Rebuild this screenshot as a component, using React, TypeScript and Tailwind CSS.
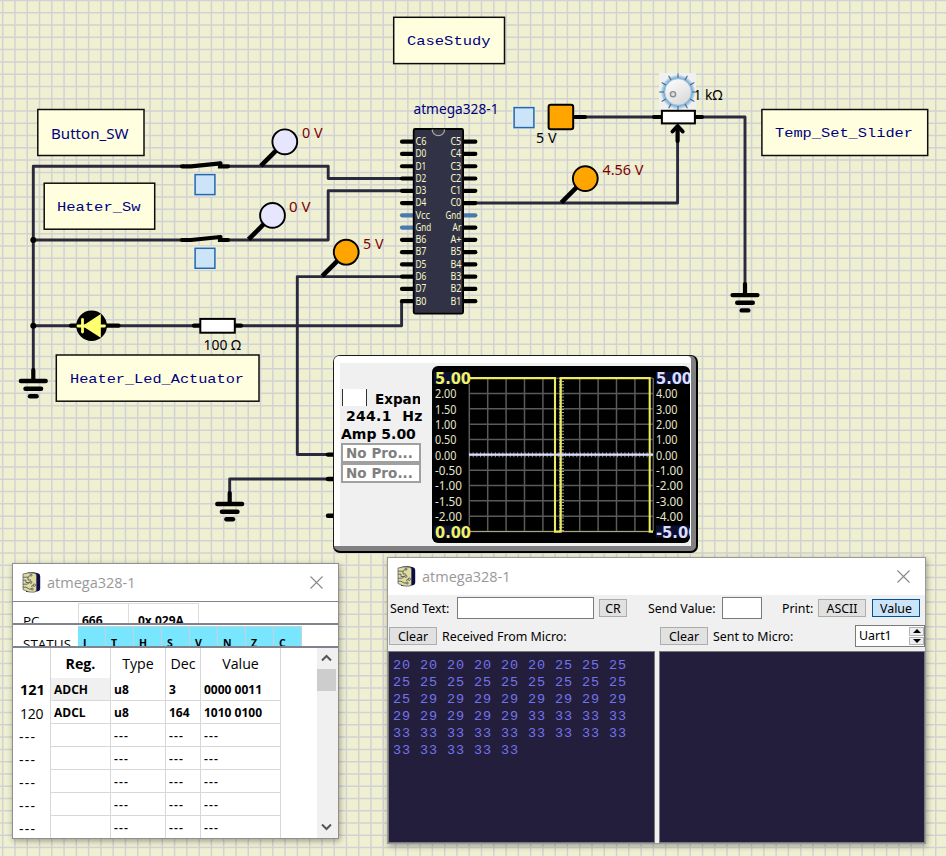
import React from "react";

const NOTO = "'Noto Sans','Open Sans',sans-serif";
const MONO = "'Liberation Mono','Courier New',monospace";
const VERDANA = "'DejaVu Sans',Verdana,sans-serif";

const PITCH = 12.277;
const WIRE = "#29293f";

type LabelProps = {
  x: number;
  y: number;
  w: number;
  size: number;
  fill?: string;
  font?: string;
  bold?: boolean;
  children: string;
};

function Label({ x, y, w, size, fill = "#000", font = NOTO, bold, children }: LabelProps) {
  return (
    <text x={x} y={y} textLength={w} lengthAdjust="spacingAndGlyphs" fontSize={size} fill={fill} fontFamily={font} fontWeight={bold ? 700 : 400}>
      {children}
    </text>
  );
}

function Note({ x, y, w, h, children }: { x: number; y: number; w: number; h: number; children: React.ReactNode }) {
  return (
    <g>
      <rect x={x} y={y} width={w} height={h} fill="#ffffdf" stroke="#0c0c0c" strokeWidth={1.5} />
      {children}
    </g>
  );
}

function Ground({ x, y }: { x: number; y: number }) {
  return (
    <g stroke="#000" strokeLinecap="round">
      <path d={`M${x} ${y - 11}V${y}`} strokeWidth={4.2} />
      <path d={`M${x - 12.4} ${y}h24.8`} strokeWidth={4.4} />
      <path d={`M${x - 7.8} ${y + 7.7}h15.6`} strokeWidth={4.4} />
      <path d={`M${x - 3.3} ${y + 15.3}h6.6`} strokeWidth={4.4} />
    </g>
  );
}

function Probe({ x, y, on }: { x: number; y: number; on?: boolean }) {
  return (
    <g>
      <path d={`M${x - 24} ${y + 24}L${x - 8} ${y + 8}`} stroke="#000" strokeWidth={4.6} />
      <circle cx={x} cy={y} r={12.4} fill={on ? "#ffa500" : "#e6e6ff"} stroke="#000" strokeWidth={1.9} />
    </g>
  );
}

function PushButton({ x, y }: { x: number; y: number }) {
  return (
    <g>
      <rect x={x - 1.2} y={y - 1.2} width={23.2} height={23.4} fill="#e9eff0" />
      <rect x={x + 0.6} y={y + 0.6} width={19.8} height={20} fill="#cce4f7" stroke="#2468a8" strokeWidth={1.5} />
    </g>
  );
}

function Switch({ y }: { y: number }) {
  return (
    <g stroke="#000" strokeWidth={4.2} strokeLinecap="round" fill="none">
      <path d={`M182 ${y}h9L220.5 ${y - 3}`} />
      <path d={`M220 ${y - 2.7}V${y}h8`} />
    </g>
  );
}

const leftPins = ["C6", "D0", "D1", "D2", "D3", "D4", "Vcc", "Gnd", "B6", "B7", "D5", "D6", "D7", "B0"];
const rightPins = ["C5", "C4", "C3", "C2", "C1", "C0", "Gnd", "Ar", "A+", "B5", "B4", "B3", "B2", "B1"];
const blueLeft = [6, 7];
const blueRight = [6];

function pinWidth(name: string) {
  if (name === "Gnd") return 15.8;
  if (name === "Vcc") return 14.5;
  if (name === "Ar") return 8.7;
  return 10.9;
}

function Chip() {
  return (
    <g>
      {leftPins.map((p, i) => (
        <path key={i} d={`M402 ${141.7 + i * 12.27}h12`} stroke={blueLeft.includes(i) ? "#4a78b0" : "#000"} strokeWidth={4.2} strokeLinecap="round" />
      ))}
      {rightPins.map((p, i) => (
        <path key={i} d={`M463 ${141.7 + i * 12.27}h12.3`} stroke={blueRight.includes(i) ? "#4a78b0" : "#000"} strokeWidth={4.2} strokeLinecap="round" />
      ))}
      <rect x={413.7} y={129} width={49.4} height={184.6} rx={1.5} fill="#323246" stroke="#000" strokeWidth={1.8} />
      <path d="M432.2 129.5a6.2 6.2 0 0 0 12.4 0" fill="#3a3a48" stroke="#a8a8a0" strokeWidth={1.3} />
      {leftPins.map((p, i) => (
        <Label key={i} x={415.5} y={145 + i * 12.27} w={pinWidth(p)} size={10.1} fill="#fafac8">{p}</Label>
      ))}
      {rightPins.map((p, i) => (
        <Label key={i} x={461.3 - pinWidth(p)} y={145 + i * 12.27} w={pinWidth(p)} size={10.1} fill="#fafac8">{p}</Label>
      ))}
    </g>
  );
}

function Knob() {
  const ticks = Array.from({ length: 12 }, (_, i) => (i * Math.PI) / 6);
  return (
    <g>
      <defs>
        <radialGradient id="glow" cx="0.5" cy="0.5" r="0.5">
          <stop offset="0.78" stopColor="#6fb0e0" />
          <stop offset="0.9" stopColor="#a9d0ec" />
          <stop offset="1" stopColor="#f0f0f0" />
        </radialGradient>
        <linearGradient id="face" x1="0" y1="0" x2="0.6" y2="1">
          <stop offset="0" stopColor="#ffffff" />
          <stop offset="1" stopColor="#dcdcdc" />
        </linearGradient>
      </defs>
      <rect x={659} y={73} width={37} height={37} fill="#f0f0f0" />
      <circle cx={678} cy={92} r={17.5} fill="url(#glow)" />
      {ticks.map((a, i) => (
        <path key={i} d={`M${678 + 14 * Math.cos(a)} ${92 + 14 * Math.sin(a)}L${678 + 18.8 * Math.cos(a)} ${92 + 18.8 * Math.sin(a)}`} stroke="#56646e" strokeWidth={1.1} />
      ))}
      <circle cx={678} cy={92} r={13.2} fill="url(#face)" stroke="#a9bccb" strokeWidth={0.8} />
      <circle cx={673} cy={94.2} r={2.6} fill="#ddd" stroke="#8c8c8c" strokeWidth={1.4} />
    </g>
  );
}

function Circuit() {
  const cols = Array.from({ length: 77 }, (_, i) => 2.7 + i * PITCH);
  const rows = Array.from({ length: 70 }, (_, i) => 0.5 + i * PITCH);
  return (
    <svg className="absolute inset-0" width={946} height={856} viewBox="0 0 946 856">
      <rect width={946} height={856} fill="#eff0d2" />
      <g stroke="#d2d2d2" strokeWidth={1.5}>
        {cols.map((x) => <path key={x} d={`M${x} 0V856`} />)}
        {rows.map((y) => <path key={y} d={`M0 ${y}H946`} />)}
      </g>

      <g fill="none" stroke={WIRE} strokeWidth={2.9} strokeLinejoin="round">
        <path d="M33.3 370V166.3H184" />
        <path d="M228 166.3H328.2V178.5H402" />
        <path d="M33.3 240H184M228 240H328.2V190.7H402" />
        <path d="M33.3 325.7H72M118 325.7H196M240 325.7H401.6V301" />
        <path d="M402 276.6H297.3V454.5H330" />
        <path d="M330 479H229.7V494" />
        <path d="M474 203H677.6V140" />
        <path d="M582 117H656M700 117H745V286" />
      </g>
      <circle cx={33.3} cy={240} r={3} />
      <circle cx={33.3} cy={325.7} r={3} />

      <Switch y={166.3} />
      <Switch y={240} />
      <PushButton x={194.5} y={174} />
      <PushButton x={194.5} y={247.7} />
      <Probe x={284.8} y={141.8} />
      <Probe x={272.5} y={215.4} />
      <Probe x={346.2} y={252.2} on />
      <Probe x={585.3} y={178.6} on />
      <Label x={302} y={138} w={20.5} size={14} fill="#7d0000">0 V</Label>
      <Label x={289} y={212} w={21.5} size={14} fill="#7d0000">0 V</Label>
      <Label x={363} y={249} w={20.5} size={14} fill="#7d0000">5 V</Label>
      <Label x={602.5} y={175} w={41} size={14} fill="#7d0000">4.56 V</Label>

      <Ground x={33.3} y={381} />
      <Ground x={745} y={295.1} />
      <Ground x={229.7} y={504} />

      <g stroke="#000" strokeWidth={4.2} strokeLinecap="round">
        <path d="M71 325.7H78M105 325.7H118.5M194 325.7H200M235 325.7H241" />
        <path d="M575 117H585M654 117H662M695 117H702" />
        <path d="M677.6 128V141" />
      </g>
      <circle cx={91.6} cy={325.8} r={15.3} fill="#000" />
      <path d="M100.2 315.2V336.6L83.5 326Z" fill="#ffff70" stroke="#ffff70" strokeWidth={1.2} />
      <path d="M82.5 319.5V332M78 326H104.5" stroke="#ffff70" strokeWidth={2.8} strokeLinecap="round" />
      <rect x={200.3} y={318.9} width={34.5} height={13.8} fill="#fff" stroke="#000" strokeWidth={2} />
      <Label x={203.5} y={350} w={37.5} size={14}>100 Ω</Label>

      <PushButton x={513.5} y={107} />
      <rect x={548.6} y={104.7} width={24.6} height={24.6} rx={2.2} fill="#ffa500" stroke="#000" strokeWidth={2} />
      <Label x={536} y={143} w={20.5} size={14}>5 V</Label>

      <Label x={693.5} y={99.7} w={29} size={14}>1 kΩ</Label>
      <Knob />
      <rect x={661.9} y={110.8} width={33} height={12.6} fill="#fff" stroke="#000" strokeWidth={2} />
      <path d="M677.6 126L672.5 131.5M677.6 126L682.7 131.5" stroke="#000" strokeWidth={4} strokeLinecap="round" />

      <Chip />
      <Label x={413.5} y={113.8} w={85} size={14.6} fill="#000080">atmega328-1</Label>

      <Note x={393.7} y={17.3} w={110.8} h={46.3}>
        <Label x={407} y={45.2} w={83.5} size={12.6} fill="#000080" font={MONO}>CaseStudy</Label>
      </Note>
      <Note x={37.8} y={109.5} w={106.2} h={46}>
        <Label x={51} y={138.8} w={77.5} size={14.6} fill="#000080">Button_SW</Label>
      </Note>
      <Note x={44.2} y={183.2} w={110.5} h={46}>
        <Label x={57} y={211} w={83.5} size={12.6} fill="#000080" font={MONO}>Heater_Sw</Label>
      </Note>
      <Note x={761.9} y={109.5} w={165.8} h={46}>
        <Label x={775} y={137} w={138} size={12.6} fill="#000080" font={MONO}>Temp_Set_Slider</Label>
      </Note>
      <Note x={56.3} y={355} w={202.7} h={46.2}>
        <Label x={70} y={383} w={174} size={12.6} fill="#000080" font={MONO}>Heater_Led_Actuator</Label>
      </Note>

      <path d="M328 454.6H334M328 479H334M328 515.8H334" stroke="#000" strokeWidth={4.4} strokeLinecap="round" />
    </svg>
  );
}

const leftScale = ["2.00", "1.50", "1.00", "0.50", "0.00", "-0.50", "-1.00", "-1.50", "-2.00"];
const rightScale = ["4.00", "3.00", "2.00", "1.00", "0.00", "-1.00", "-2.00", "-3.00", "-4.00"];

function Plot() {
  const n = Array.from({ length: 11 }, (_, i) => i);
  return (
    <svg width={258} height={177} viewBox="432 366 258 177" className="block">
      <g stroke="#5a5a5a" strokeWidth={1.5}>
        {n.map((i) => <path key={`c${i}`} d={`M${469.3 + i * 18.4} 378V531`} />)}
        {n.map((i) => <path key={`r${i}`} d={`M469 ${378.2 + i * 15.33}H653`} />)}
      </g>
      <path d="M469 454.7H653" stroke="#8c8c98" strokeWidth={5} strokeDasharray="1 2.7" />
      <path d="M561.5 378V531" stroke="#a0a0a0" strokeWidth={5} strokeDasharray="1 2.1" />
      <path d="M469 531.5H653" stroke="#a8a870" strokeWidth={1} />
      <path d="M469 378.1H555V531.6H560.6V378.1H649.7V531.6H653" fill="none" stroke="#ecec5c" strokeWidth={2.1} />
      <path d="M469 454.7H653" stroke="#dcdcff" strokeWidth={2.2} />
      <rect x={434} y={372} width={36} height={12} fill="#0b1030" />
      <rect x={434} y={525.5} width={36} height={12} fill="#0b1030" />
      <rect x={656} y={372} width={34} height={12} fill="#0b1030" />
      <rect x={656} y={525.5} width={34} height={12} fill="#0b1030" />
      <Label x={435} y={384} w={36} size={15} fill="#f2f265" font={VERDANA} bold>5.00</Label>
      <Label x={435} y={538} w={36} size={15} fill="#f2f265" font={VERDANA} bold>0.00</Label>
      <Label x={656} y={384} w={36} size={15} fill="#dcdcff" font={VERDANA} bold>5.00</Label>
      <Label x={656} y={538} w={42.5} size={15} fill="#dcdcff" font={VERDANA} bold>-5.00</Label>
      {leftScale.map((t, i) => (
        <Label key={i} x={435} y={398.2 + i * 15.35} w={t.length > 4 ? 27 : 21.5} size={12.2} fill="#e6e6cd">{t}</Label>
      ))}
      {rightScale.map((t, i) => (
        <Label key={i} x={656} y={398.2 + i * 15.35} w={t.length > 4 ? 27 : 21.5} size={12.2} fill="#e6e6cd">{t}</Label>
      ))}
    </svg>
  );
}

function Scope() {
  return (
    <section className="absolute left-[333px] top-[355px] flex h-[198px] w-[365px] rounded-[7px] border border-[#1a1a1a] border-r-[2px] border-b-[2px] border-b-black border-r-black bg-[#808080] pr-[5px] pb-[5px]">
      <div className="flex w-full rounded-tl-[5px] rounded-tr-[4px] bg-white pl-1.5 pt-[7px] pr-[1px]">
        <div className="flex w-full bg-[#f0f0f0] pt-[3px]">
          <div className="flex w-[92px] flex-col pl-[1px] pt-[22px] font-['DejaVu_Sans'] text-[14px] font-bold leading-[18px]">
            <div className="flex h-[18px] items-center">
              <span className="ml-[1px] h-[17px] w-[25px] border-x border-[#333] bg-white" />
              <span className="ml-2 mt-[3px] w-[45px] overflow-hidden whitespace-nowrap text-[13.5px] tracking-[0px]">Expand</span>
            </div>
            <div className="mt-[1px] whitespace-pre pl-[5px] tracking-[0.3px]">244.1  Hz</div>
            <div className="w-[80px] overflow-hidden whitespace-nowrap text-[14px] tracking-[0px]">Amp 5.00</div>
            <div className="flex h-5 w-20 items-center whitespace-nowrap border-2 border-[#a0a0a0] bg-white pl-[3px] text-[13.5px] tracking-[0.05px] text-[#808080]">No Pro...</div>
            <div className="flex h-5 w-20 items-center whitespace-nowrap border-2 border-[#a0a0a0] bg-white pl-[3px] text-[13.5px] tracking-[0.05px] text-[#808080]">No Pro...</div>
          </div>
          <div className="h-[177px] w-[258px] shrink-0 overflow-hidden rounded-[6px] bg-black">
            <Plot />
          </div>
        </div>
      </div>
    </section>
  );
}

function ChipIcon() {
  return (
    <svg width={19} height={21} viewBox="0 0 19 21">
      <path d="M3 1.5Q9-.6 16 1.2Q18.2 1.6 18.2 4V17Q18 19 15 19.5L4 20Z" fill="#0d0c45" />
      <path d="M1 2Q7 .2 13 1.2Q14.5 1.8 14.5 4V17Q14.5 19.6 13 20Q6 20.6 3.5 18.6L1 17.5Z" fill="#dede9c" stroke="#4d4860" strokeWidth={0.7} />
      <g fill="none" stroke="#4d4860" strokeWidth={0.8}>
        <path d="M1 5.2H6L8 3.6M1 8.2H4V10.5H7.5M1 12.2H5L7.5 10.5M1 15.2H4L7 17H9M9 14.4L11.5 13.4M6 5V8H9" />
        <circle cx={9} cy={3.2} r={1} />
        <circle cx={8.8} cy={10.3} r={1.1} />
        <circle cx={12.3} cy={13.2} r={1.2} />
        <circle cx={10.2} cy={17} r={1} />
      </g>
    </svg>
  );
}

function TitleBar() {
  return (
    <header className="flex h-[37px] shrink-0 items-center bg-white pl-[9px] pr-[15px]">
      <ChipIcon />
      <span className="ml-[6px] font-['Open_Sans'] text-[14.5px] text-[#999]">atmega328-1</span>
      <svg className="ml-auto" width={13} height={13} viewBox="0 0 13 13">
        <path d="M.5.5L12.5 12.5M12.5.5L.5 12.5" stroke="#888" strokeWidth={1.1} />
      </svg>
    </header>
  );
}

const registers = [
  ["121", "ADCH", "u8", "3", "0000 0011"],
  ["120", "ADCL", "u8", "164", "1010 0100"],
  ["---", "", "---", "---", "---"],
  ["---", "", "---", "---", "---"],
  ["---", "", "---", "---", "---"],
  ["---", "", "---", "---", "---"],
  ["---", "", "---", "---", "---"],
];

function rowHeadClass(i: number) {
  if (i === 0) return "pl-[7px] text-[14.5px] font-bold leading-[24px] tracking-[-0.1px]";
  if (i === 1) return "pl-[7px] text-[14px] font-normal leading-[25px] tracking-[-0.2px]";
  return "pl-[6px] text-[14px] font-normal leading-[25px] tracking-[1.2px]";
}

function RegisterWindow() {
  return (
    <section className="absolute left-3 top-[563px] flex h-[276px] w-[327px] flex-col border border-[#8f8f8f] bg-white font-['Open_Sans'] shadow-[1px_2px_6px_rgba(0,0,0,0.35)]">
      <TitleBar />
      <div className="flex h-6 shrink-0 overflow-hidden border-t border-b-2 border-[#7f838d] text-[12px]">
        <div className="w-[65px] shrink-0 pl-2.5 pt-[9px] text-[13.5px]">PC</div>
        <div className="mt-px w-[50px] border-l border-t border-[#ddd] pl-[3px] pt-[8px] font-bold">666</div>
        <div className="mt-px w-[71px] border-x border-t border-[#ddd] pl-[9px] pt-[8px] font-bold">0x 029A</div>
      </div>
      <div className="flex h-[23px] shrink-0 overflow-hidden border-b-2 border-[#7f838d]">
        <div className="w-[65px] shrink-0 pl-2.5 pt-[9px] text-[13.5px]">STATUS</div>
        {["I", "T", "H", "S", "V", "N", "Z", "C"].map((f) => (
          <div key={f} className="mt-px w-[28px] border-r border-t border-[#c8d0d8] bg-[#78e6ff] pl-[5px] pt-[9px] text-[10.5px] font-bold">{f}</div>
        ))}
      </div>
      <div className="flex min-h-0 flex-1">
        <div className="min-w-0 flex-1 overflow-hidden">
          <div className="grid h-[30px] w-[268px] grid-cols-[37px_60px_55px_35px_81px] text-center text-[14.2px] leading-[31px]">
            <span />
            <span className="border-l border-[#d8d8d8] font-bold">Reg.</span>
            <span className="border-l border-[#d8d8d8]">Type</span>
            <span className="border-l border-[#d8d8d8] tracking-[-0.1px]">Dec</span>
            <span className="border-x border-[#d8d8d8]">Value</span>
          </div>
          {registers.map((r, i) => (
            <div key={i} className={i < 2 ? "grid h-[23px] w-[268px] grid-cols-[37px_60px_55px_35px_81px] text-[12px] font-bold leading-[23px]" : "grid h-[23px] w-[268px] grid-cols-[37px_60px_55px_35px_81px] text-[12px] font-semibold leading-[24px] tracking-[1.2px]"}>
              <span className={rowHeadClass(i)}>{r[0]}</span>
              <span className={i === 0 ? "h-[23px] border-b border-l border-[#d8d8d8] bg-[#f0f0f0] pl-[3px]" : "h-[23px] border-b border-l border-[#d8d8d8] pl-[3px]"}>{r[1]}</span>
              <span className="h-[23px] border-b border-l border-[#d8d8d8] pl-[3px]">{r[2]}</span>
              <span className="h-[23px] border-b border-l border-[#d8d8d8] pl-[3px]">{r[3]}</span>
              <span className="h-[23px] border-x border-b border-[#d8d8d8] pl-[3px]">{r[4]}</span>
            </div>
          ))}
        </div>
        <div className="flex w-[21px] flex-col items-center bg-[#f0f0f0] pr-0.5">
          <svg width={19} height={21} viewBox="0 0 19 21"><path d="M5 12.5L9.5 8L14 12.5" fill="none" stroke="#555" strokeWidth={2} /></svg>
          <div className="h-[22px] w-[19px] bg-[#cdcdcd]" />
          <svg className="mt-auto" width={19} height={22} viewBox="0 0 19 22"><path d="M5 8.5L9.5 13L14 8.5" fill="none" stroke="#555" strokeWidth={2} /></svg>
        </div>
      </div>
    </section>
  );
}

const received = [
  "20 20 20 20 20 20 25 25 25",
  "25 25 25 25 25 25 25 25 25",
  "25 29 29 29 29 29 29 29 29",
  "29 29 29 29 29 33 33 33 33",
  "33 33 33 33 33 33 33 33 33",
  "33 33 33 33 33",
];

function SerialWindow() {
  return (
    <section className="absolute left-[387px] top-[557px] flex h-[287px] w-[539px] flex-col border border-[#999] bg-[#f0f0f0] font-['Noto_Sans'] text-[12.4px] leading-[16px] shadow-[1px_2px_6px_rgba(0,0,0,0.35)]">
      <TitleBar />
      <div className="flex h-[26px] shrink-0 items-center whitespace-nowrap pl-0.5">
        <span className="w-[67px] pt-px">Send Text:</span>
        <span className="h-[22px] w-[137px] border border-[#7a7a7a] bg-white" />
        <span className="ml-[5px] flex h-[18px] w-7 items-center justify-center border border-[#adadad] bg-[#e1e1e1] pt-px">CR</span>
        <span className="ml-[21px] w-[74px] pt-px">Send Value:</span>
        <span className="h-[22px] w-10 border border-[#7a7a7a] bg-white" />
        <span className="ml-5 w-[36px] pt-px">Print:</span>
        <span className="flex h-[18px] w-12 items-center justify-center border border-[#adadad] bg-[#e1e1e1] pt-px">ASCII</span>
        <span className="ml-1.5 flex h-[18px] w-12 items-center justify-center border border-[#005499] bg-[#cce4f7] pt-px">Value</span>
      </div>
      <div className="flex h-[30px] shrink-0 items-center whitespace-nowrap pl-px">
        <span className="flex h-[18px] w-12 items-center justify-center border border-[#adadad] bg-[#e1e1e1] pt-px">Clear</span>
        <span className="ml-[5px] w-[218px] pt-px">Received From Micro:</span>
        <span className="flex h-[18px] w-12 items-center justify-center border border-[#adadad] bg-[#e1e1e1] pt-px">Clear</span>
        <span className="ml-[5px] pt-px">Sent to Micro:</span>
        <span className="ml-auto flex h-[22px] w-[70px] items-center border border-[#7a7a7a] bg-white pl-[3px]">
          Uart1
          <span className="ml-auto flex h-full w-[15px] flex-col gap-px bg-white py-px">
            <span className="flex flex-1 items-center justify-center border border-[#b5b5b5] bg-[#eee]">
              <svg width={8} height={4} viewBox="0 0 8 4"><path d="M0 4L4 0L8 4Z" /></svg>
            </span>
            <span className="flex flex-1 items-center justify-center border border-[#b5b5b5] bg-[#eee]">
              <svg width={8} height={4} viewBox="0 0 8 4"><path d="M0 0L4 4L8 0Z" /></svg>
            </span>
          </span>
        </span>
      </div>
      <div className="flex min-h-0 flex-1 gap-1">
        <div className="w-[267px] whitespace-pre border border-[#77777c] bg-[#231e3c] pl-[4px] pt-[5px] font-['Liberation_Mono'] text-[13.5px] leading-[17px] tracking-[0.9px] text-[#7373ee]">
          {received.map((line, i) => <div key={i}>{line}</div>)}
        </div>
        <div className="flex-1 border border-[#77777c] bg-[#231e3c]" />
      </div>
    </section>
  );
}

export default function App() {
  return (
    <main className="relative h-[856px] w-[946px] overflow-hidden bg-[#eff0d2] font-['Noto_Sans',sans-serif] text-black">
      <Circuit />
      <Scope />
      <RegisterWindow />
      <SerialWindow />
    </main>
  );
}
